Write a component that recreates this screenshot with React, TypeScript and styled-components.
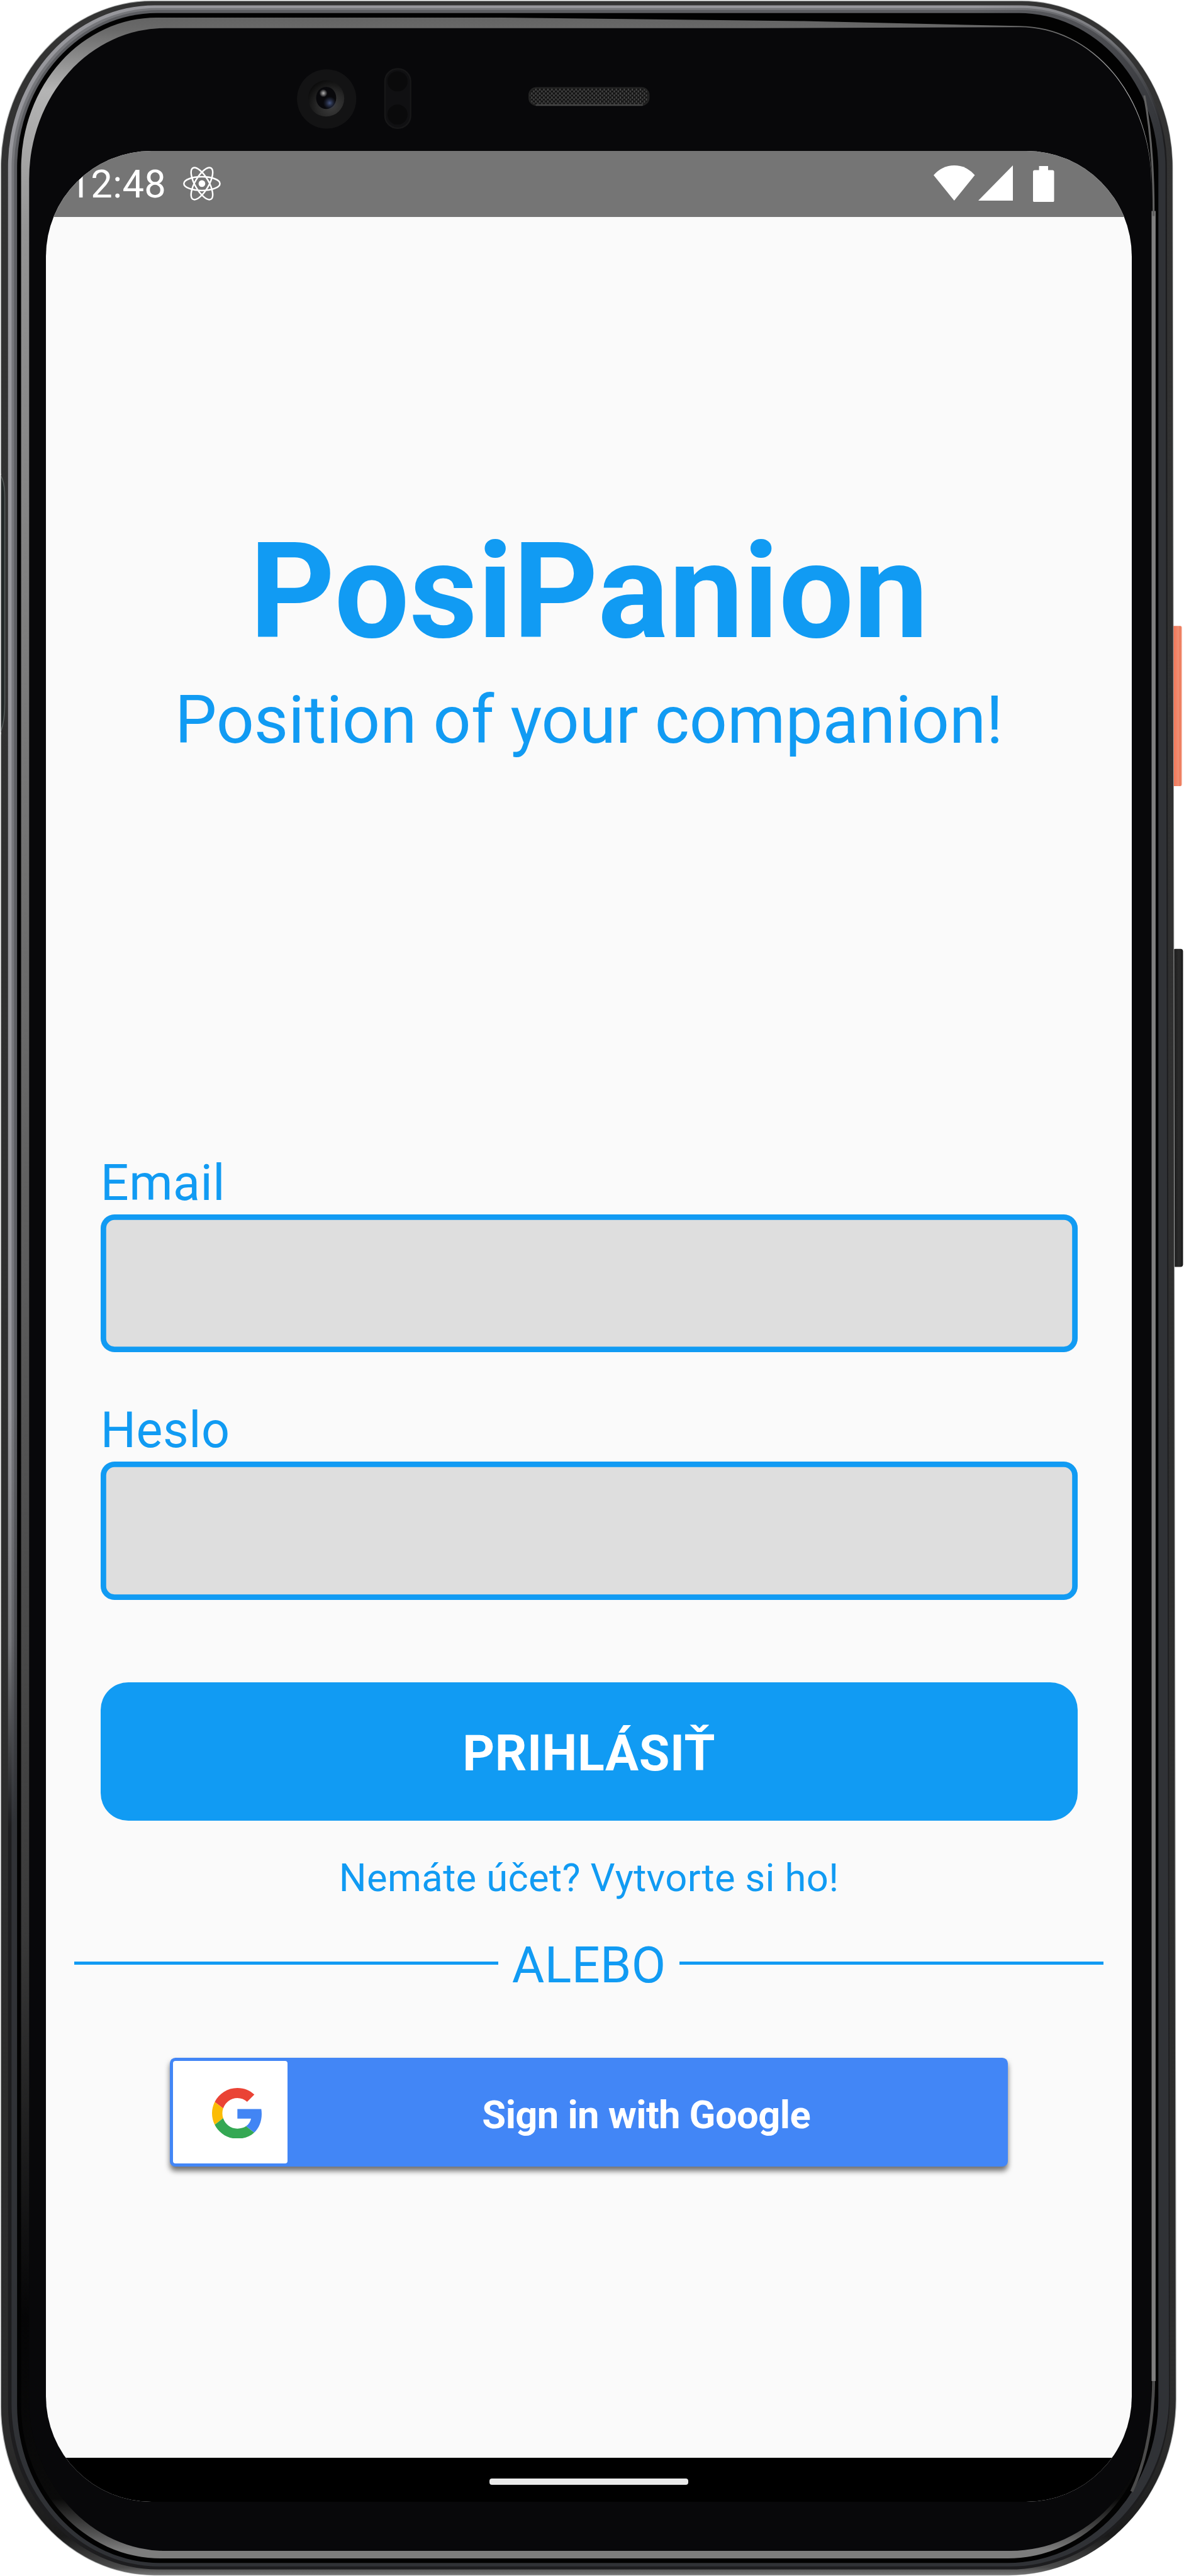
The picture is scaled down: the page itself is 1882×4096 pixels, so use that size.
import React from "react";
import styled, { createGlobalStyle } from "styled-components";

/* Design units are device pixels of the phone artwork; the page shows them scaled. */
const SCALE = 4096 / 5128;
const u = (n: number) => `${+(n * SCALE).toFixed(3)}px`;

const BLUE = "#119bf3";

const GlobalStyle = createGlobalStyle`
  * { box-sizing: border-box; }
  html, body { margin: 0; padding: 0; background: #fff; }
  body { font-family: Roboto, "Liberation Sans", sans-serif; }
`;

const Stage = styled.main`
  position: relative;
  width: 1882px;
  height: 4096px;
  overflow: hidden;
  padding: ${u(300)} 0 0 ${u(92)};
`;

const FrameArt = styled.svg`
  position: absolute;
  inset: 0;
  width: 1882px;
  height: 4096px;
`;

const Screen = styled.div`
  position: relative;
  display: flex;
  flex-direction: column;
  width: ${u(2160)};
  height: ${u(4680)};
  border-radius: ${u(210)};
  overflow: hidden;
  background: #fafafa;
`;

const StatusBar = styled.header`
  display: flex;
  align-items: center;
  flex: none;
  height: ${u(132)};
  padding: 0 ${u(154)} 0 ${u(45)};
  background: #757575;
  color: #fff;
`;

const Clock = styled.span`
  margin-right: ${u(34)};
  padding-top: ${u(5)};
  font-size: ${u(77)};
  line-height: ${u(90)};
  letter-spacing: ${u(0.4)};
`;

const StatusIcon = styled.svg<{ $w: number; $h: number; $gap?: number; $up?: number }>`
  flex: none;
  width: ${(p) => u(p.$w)};
  height: ${(p) => u(p.$h)};
  margin-left: ${(p) => u(p.$gap ?? 0)};
  margin-bottom: ${(p) => u(p.$up ?? 0)};
`;

const Spring = styled.div`
  flex: 1;
`;

const Content = styled.section`
  flex: 1;
  display: flex;
  flex-direction: column;
  padding: ${u(591)} ${u(108)} 0;
  color: ${BLUE};
`;

const Title = styled.h1`
  margin: 0;
  text-align: center;
  font-size: ${u(264)};
  font-weight: 700;
  line-height: ${u(309.4)};
  letter-spacing: ${u(0.3)};
`;

const Subtitle = styled.p`
  margin: ${u(25)} 0 ${u(785)};
  text-align: center;
  white-space: nowrap;
  font-size: ${u(132)};
  line-height: ${u(154.8)};
`;

const Field = styled.label`
  display: flex;
  flex-direction: column;
  gap: ${u(4)};
  margin-bottom: ${u(97.5)};
`;

const FieldLabel = styled.span`
  font-size: ${u(99)};
  line-height: ${u(116)};
  letter-spacing: ${u(0.6)};
`;

const Input = styled.input`
  appearance: none;
  width: 100%;
  height: ${u(275)};
  border: 0;
  border-radius: ${u(27.5)};
  background: #dedede;
  box-shadow: inset 0 0 0 ${u(11)} ${BLUE};
  outline: none;
`;

const LoginButton = styled.button`
  height: ${u(276)};
  margin-top: ${u(66.9)};
  padding: ${u(8)} 0 0;
  border: 0;
  border-radius: ${u(55)};
  background: ${BLUE};
  color: #fff;
  font-family: inherit;
  font-size: ${u(99)};
  font-weight: 700;
  line-height: ${u(116)};
  letter-spacing: ${u(0.7)};
`;

const RegisterLink = styled.p`
  margin: ${u(68.3)} 0 ${u(71.5)};
  text-align: center;
  font-size: ${u(77)};
  line-height: ${u(90.2)};
  letter-spacing: ${u(0.45)};
`;

const Divider = styled.div`
  display: flex;
  align-items: center;
  gap: ${u(27)};
  margin: 0 ${u(-52)};
  font-size: ${u(99)};
  line-height: ${u(116)};
  letter-spacing: ${u(0.5)};
`;

const Rule = styled.span`
  flex: 1;
  height: ${u(5.8)};
  margin-bottom: ${u(10)};
  background: ${BLUE};
`;

const GoogleButton = styled.button`
  align-self: center;
  display: flex;
  width: ${u(1668)};
  height: ${u(216)};
  margin-top: ${u(126)};
  padding: ${u(6)};
  border: 0;
  border-radius: ${u(11)};
  background: #4286f6;
  box-shadow: 0 ${u(8)} ${u(11)} rgba(0, 0, 0, 0.55);
  color: #fff;
  font-family: inherit;
`;

const GoogleMark = styled.span`
  display: flex;
  align-items: center;
  flex: none;
  width: ${u(228)};
  padding-top: ${u(3)};
  padding-left: ${u(78)};
  border-radius: ${u(5)};
  background: #fff;
`;

const GoogleLabel = styled.span`
  flex: 1;
  align-self: center;
  padding-top: ${u(12)};
  text-align: center;
  font-size: ${u(77)};
  font-weight: 700;
  line-height: ${u(90)};
  letter-spacing: ${u(-0.75)};
`;

const NavBar = styled.footer`
  display: flex;
  flex: none;
  justify-content: center;
  height: ${u(88)};
  padding-top: ${u(42.5)};
  background: #000;
`;

const HomePill = styled.span`
  width: ${u(396)};
  height: ${u(12)};
  border-radius: ${u(5)};
  background: #eaeaea;
`;

type Corner = [number, number];

/* Rounded outline with separate elliptical radii for each corner. */
function outline(l: number, t: number, rt: number, rb: number, b: number, tl: Corner, tr: Corner, br: Corner, bl: Corner) {
  return `M${l} ${t + tl[1]}A${tl[0]} ${tl[1]} 0 0 1 ${l + tl[0]} ${t}H${rt - tr[0]}A${tr[0]} ${tr[1]} 0 0 1 ${rt} ${t + tr[1]}L${rb} ${b - br[1]}A${br[0]} ${br[1]} 0 0 1 ${rb - br[0]} ${b}H${l + bl[0]}A${bl[0]} ${bl[1]} 0 0 1 ${l} ${b - bl[1]}Z`;
}

function PhoneFrame() {
  return (
    <FrameArt viewBox="0 0 2356 5128" preserveAspectRatio="none" aria-hidden="true">
      <defs>
        <linearGradient id="shell" x1="0" y1="0" x2="0" y2="1">
          <stop offset="0" stopColor="#333" />
          <stop offset="0.95" stopColor="#2b2b2b" />
          <stop offset="0.985" stopColor="#1a1a1a" />
          <stop offset="0.997" stopColor="#4a4a4a" />
          <stop offset="1" stopColor="#777" />
        </linearGradient>
        <linearGradient id="railA" gradientUnits="userSpaceOnUse" x1="1950" y1="0" x2="2330" y2="260">
          <stop offset="0" stopColor="#97979c" />
          <stop offset="0.55" stopColor="#77787c" />
          <stop offset="0.85" stopColor="#3a3b3e" />
          <stop offset="1" stopColor="#1d1d1f" />
        </linearGradient>
        <linearGradient id="railMid" gradientUnits="userSpaceOnUse" x1="1950" y1="0" x2="2330" y2="260">
          <stop offset="0" stopColor="#76777b" />
          <stop offset="0.55" stopColor="#626367" />
          <stop offset="1" stopColor="#303236" />
        </linearGradient>
        <linearGradient id="railB" gradientUnits="userSpaceOnUse" x1="1950" y1="0" x2="2330" y2="260">
          <stop offset="0" stopColor="#5c5d61" />
          <stop offset="0.55" stopColor="#4b4c50" />
          <stop offset="1" stopColor="#303236" />
        </linearGradient>
        <linearGradient id="inner" gradientUnits="userSpaceOnUse" x1="0" y1="0" x2="0" y2="5128">
          <stop offset="0" stopColor="#5a5a5a" />
          <stop offset="0.012" stopColor="#6a6a6a" />
          <stop offset="0.035" stopColor="#b4b4b4" />
          <stop offset="0.09" stopColor="#939393" />
          <stop offset="0.3" stopColor="#767676" />
          <stop offset="0.75" stopColor="#3a3a3a" />
          <stop offset="0.9" stopColor="#050506" />
          <stop offset="0.97" stopColor="#0a0a0a" />
          <stop offset="0.984" stopColor="#555" />
          <stop offset="0.99" stopColor="#7d7d7d" />
        </linearGradient>
        <radialGradient id="lens" cx="0.65" cy="0.7" r="0.75">
          <stop offset="0" stopColor="#3d3d3d" />
          <stop offset="0.55" stopColor="#262626" />
          <stop offset="1" stopColor="#0b0b0b" />
        </radialGradient>
        <radialGradient id="spot">
          <stop offset="0" stopColor="#b5b5b5" />
          <stop offset="1" stopColor="#b5b5b5" stopOpacity="0" />
        </radialGradient>
        <radialGradient id="glow">
          <stop offset="0" stopColor="#465580" />
          <stop offset="1" stopColor="#2c3550" stopOpacity="0" />
        </radialGradient>
        <linearGradient id="power" x1="0" y1="0" x2="1" y2="0">
          <stop offset="0" stopColor="#e8684a" />
          <stop offset="0.3" stopColor="#f37b5d" />
          <stop offset="0.65" stopColor="#ef8f74" />
          <stop offset="0.85" stopColor="#ee7656" />
          <stop offset="1" stopColor="#f5b9a8" />
        </linearGradient>
        <linearGradient id="volume" x1="0" y1="0" x2="1" y2="0">
          <stop offset="0" stopColor="#191919" />
          <stop offset="0.6" stopColor="#2b2b2b" />
          <stop offset="0.85" stopColor="#222" />
          <stop offset="1" stopColor="#090909" />
        </linearGradient>
        <pattern id="mesh" width="8" height="8" patternUnits="userSpaceOnUse">
          <rect width="8" height="8" fill="#151515" />
          <rect x="1" y="0" width="2.6" height="4.5" fill="#4a4a4a" />
          <rect x="5" y="4" width="2.6" height="4" fill="#4a4a4a" />
        </pattern>
      </defs>

      <rect x="2332" y="1246" width="20" height="319" rx="4" fill="url(#power)" />
      <rect x="2334" y="1889" width="20" height="633" rx="5" fill="url(#volume)" />

      <path d={outline(1, 1, 2334, 2341, 5127, [302, 332], [302, 332], [334, 352], [306, 336])} fill="#a9abab" />
      <path d={outline(2.5, 2.5, 2333, 2339.5, 5126, [300, 330], [300, 330], [330, 350], [305, 335])} fill="url(#shell)" />
      {/* polished rail running around the glass */}
      <path d={outline(16, 10.5, 2322, 2328, 5115, [292, 322], [292, 322], [320, 340], [298, 328])} fill="url(#railA)" />
      <path d={outline(23, 16, 2319, 2326, 5109, [288, 318], [288, 318], [318, 338], [294, 324])} fill="url(#railMid)" />
      <path d={outline(28, 20, 2318, 2325, 5107, [286, 316], [286, 316], [316, 336], [292, 322])} fill="url(#railB)" />
      <path d={outline(34, 26, 2305, 2305, 5102, [278, 308], [278, 312], [300, 326], [284, 314])} fill="#020202" />
      {/* glass bevel, tapering out at the top right corner */}
      <path
        d="M42 335A270 300 0 0 1 312 35H1000L1600 42L2040 52H2029A262 310 0 0 1 2291 366V4780A286 313 0 0 1 2005 5093H320A278 306 0 0 1 42 4787Z"
        fill="url(#inner)"
      />
      <path
        d="M58 356A270 300 0 0 1 328 56H1500L2029 54A262 312 0 0 1 2291 366V4772A280 306 0 0 1 2011 5078H330A272 302 0 0 1 58 4776Z"
        fill="#08080a"
      />
      <path d="M2295.500 420V4740" stroke="#7f7f7f" strokeWidth="8" />
      <path d="M2295.500 4740Q2294 4870 2252 4960" stroke="#4b4b4b" strokeWidth="6" fill="none" />
      <path d="M2277 190Q2296 290 2295.500 430" stroke="#606060" strokeWidth="4" fill="none" />

      <path d="M0 943Q10 955 10 990V1400Q10 1440 0 1462Z" fill="#232828" />
      <path d="M2 948Q9.500 960 9.500 990V1400Q9.500 1435 2 1455" stroke="#565b5a" strokeWidth="2" fill="none" />
      <rect x="0" y="943" width="2" height="519" fill="#e8e8e8" />

      <circle cx="650" cy="197" r="59" fill="#131314" />
      <circle cx="649" cy="196" r="36" fill="url(#lens)" />
      <ellipse cx="649" cy="195" rx="20" ry="22" fill="#08080b" />
      <circle cx="656" cy="205" r="13" fill="url(#glow)" />
      <circle cx="643.5" cy="185.500" r="8" fill="url(#spot)" />

      <rect x="766" y="137" width="51" height="118" rx="25" fill="#101012" stroke="#171718" strokeWidth="3" />
      <circle cx="791" cy="162" r="20" fill="#0a0a0b" />
      <circle cx="791" cy="228" r="20" fill="#0a0a0b" />

      <rect x="1053" y="175" width="238" height="34" rx="14" fill="url(#mesh)" stroke="#222" strokeWidth="3" />
      <path d="M1066 209H1279" stroke="#444" strokeWidth="3" />
    </FrameArt>
  );
}

function ReactLogo() {
  return (
    <StatusIcon $w={75} $h={67.5} viewBox="-11.5 -10.23 23 20.46">
      <circle r="2.05" fill="#fff" />
      <g fill="none" stroke="#fff" strokeWidth="0.95">
        <ellipse rx="11" ry="4.2" />
        <ellipse rx="11" ry="4.2" transform="rotate(60)" />
        <ellipse rx="11" ry="4.2" transform="rotate(120)" />
      </g>
    </StatusIcon>
  );
}

function GoogleLogo() {
  return (
    <StatusIcon $w={101} $h={101} viewBox="0 0 48 48">
      <path fill="#EA4335" d="M24 9.5c3.540 0 6.710 1.220 9.210 3.600l6.850-6.850C35.900 2.380 30.470 0 24 0 14.620 0 6.510 5.380 2.560 13.220l7.980 6.190C12.430 13.720 17.740 9.500 24 9.500z" />
      <path fill="#4285F4" d="M46.980 24.550c0-1.570-.15-3.090-.38-4.550H24v9.020h12.940c-.58 2.960-2.260 5.480-4.780 7.180l7.730 6c4.510-4.180 7.090-10.360 7.090-17.650z" />
      <path fill="#FBBC05" d="M10.530 28.590c-.48-1.450-.76-2.990-.76-4.590s.27-3.140.76-4.590l-7.980-6.190C.92 16.460 0 20.120 0 24c0 3.880.92 7.540 2.560 10.780l7.970-6.190z" />
      <path fill="#34A853" d="M24 48c6.480 0 11.930-2.130 15.890-5.810l-7.730-6c-2.150 1.450-4.920 2.300-8.160 2.300-6.260 0-11.570-4.220-13.470-9.910l-7.980 6.190C6.510 42.620 14.620 48 24 48z" />
    </StatusIcon>
  );
}

export default function App() {
  return (
    <>
      <GlobalStyle />
      <Stage>
        <PhoneFrame />
        <Screen>
          <StatusBar>
            <Clock>12:48</Clock>
            <ReactLogo />
            <Spring />
            <StatusIcon $w={82} $h={70} $up={3} viewBox="0 0 82 70">
              <path d="M0 19.500Q17 0 41 0T82 19.500L41 70Z" fill="#fff" />
            </StatusIcon>
            <StatusIcon $w={69} $h={70} $gap={7.3} $up={3} viewBox="0 0 69 70">
              <path d="M69 0V70H0Z" fill="#fff" />
            </StatusIcon>
            <StatusIcon $w={42} $h={72} $gap={39.8} viewBox="0 0 42 72">
              <path d="M12 0H30V8H38.500Q42 8 42 11.500V68.500Q42 72 38.500 72H3.500Q0 72 0 68.500V11.500Q0 8 3.500 8H12Z" fill="#fff" />
            </StatusIcon>
          </StatusBar>
          <Content>
            <Title>PosiPanion</Title>
            <Subtitle>Position of your companion!</Subtitle>
            <Field>
              <FieldLabel>Email</FieldLabel>
              <Input type="email" />
            </Field>
            <Field>
              <FieldLabel>Heslo</FieldLabel>
              <Input type="password" />
            </Field>
            <LoginButton>PRIHLÁSIŤ</LoginButton>
            <RegisterLink>Nemáte účet? Vytvorte si ho!</RegisterLink>
            <Divider>
              <Rule />
              ALEBO
              <Rule />
            </Divider>
            <GoogleButton>
              <GoogleMark>
                <GoogleLogo />
              </GoogleMark>
              <GoogleLabel>Sign in with Google</GoogleLabel>
            </GoogleButton>
          </Content>
          <NavBar>
            <HomePill />
          </NavBar>
        </Screen>
      </Stage>
    </>
  );
}
